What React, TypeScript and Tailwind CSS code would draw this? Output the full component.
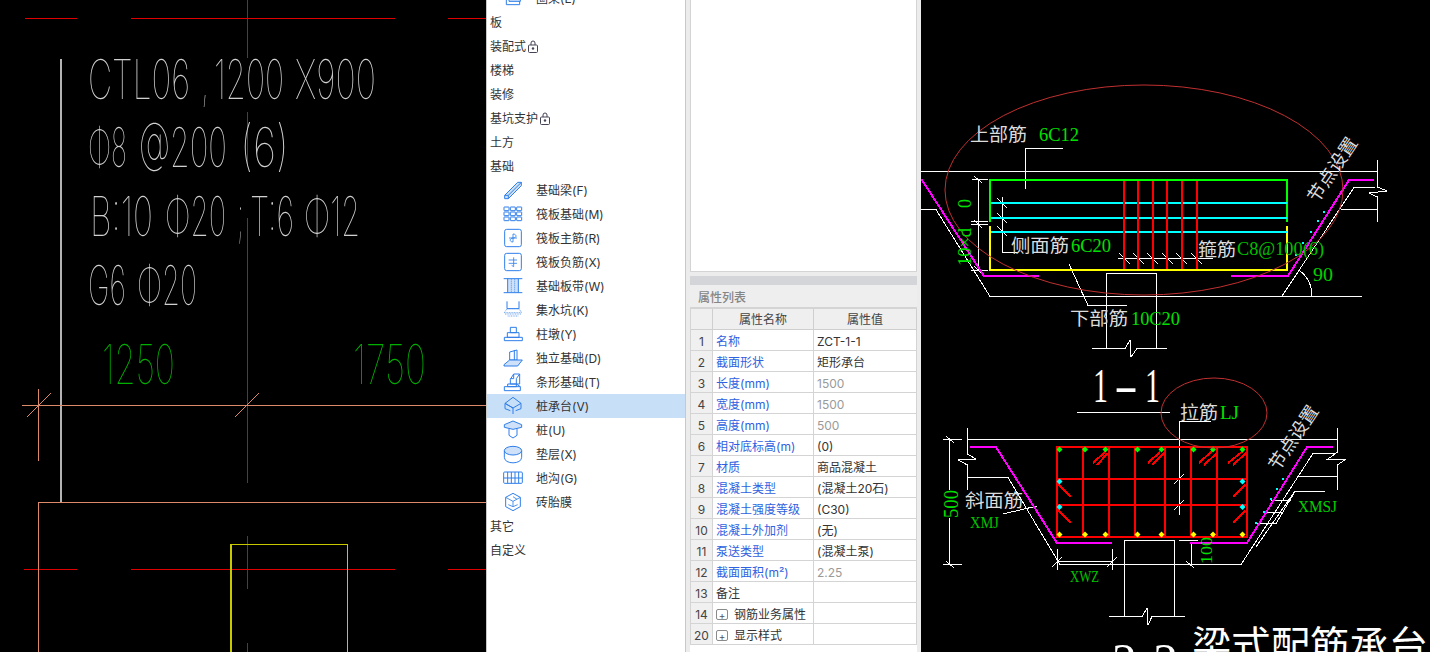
import React from "react";

const B = "#2f7fea";
const F = "#cfe1f9";

type IconProps = { children: React.ReactNode };
const Ico = ({ children }: IconProps) => (
  <svg width="20" height="20" viewBox="0 0 60 60" fill="none" stroke={B} strokeWidth="3" strokeLinejoin="round" className="shrink-0">
    {children}
  </svg>
);

const icons: Record<string, React.ReactNode> = {
  ring: <Ico><path d="M10 12 L50 12 L50 50 L10 50 Z" /><path d="M18 4 L52 4 L52 40 L18 40 Z" fill={F} /></Ico>,
  beam: <Ico><path d="M5 46 L44 7 L55 7 L55 17 L16 56 L5 56 Z" fill={F} /><path d="M5 46 L16 46 L16 56 M16 46 L55 7" /></Ico>,
  raft: <Ico><g>{[0, 1, 2].map((r) => [0, 1, 2].map((c) => <rect key={`${r}${c}`} x={3 + c * 19} y={9 + r * 15} width="15" height="11" rx="1" />))}</g></Ico>,
  rmain: <Ico><rect x="5" y="4" width="50" height="52" rx="6" /><path d="M30 18 C42 18 42 30 30 30 C20 30 18 42 30 42 M18 30 H42 M30 18 V42" strokeWidth="2.5" /></Ico>,
  rneg: <Ico><rect x="5" y="4" width="50" height="52" rx="6" /><path d="M17 24 H42 M17 34 H42 M32 16 V44 M32 44 L26 40" strokeWidth="2.5" /></Ico>,
  band: <Ico><rect x="14" y="8" width="32" height="42" fill={F} stroke="none" /><path d="M2 8 H58 M2 50 H58 M14 8 V50 M46 8 V50" /><path d="M25 10 V48 M35 10 V48" strokeDasharray="3 3" strokeWidth="2.5" /></Ico>,
  pit: <Ico><path d="M12 4 V26 H48 V4" /><path d="M4 38 L12 26 H48 L56 38 Z" strokeWidth="2" strokeDasharray="3 2" /><path d="M6 42 L56 42 M14 48 H46" strokeDasharray="3 2" strokeWidth="2" /></Ico>,
  pier: <Ico><path d="M22 10 H40 V26 H22 Z M13 26 H48 V40 H13 Z M4 40 H58 V50 H4 Z" /></Ico>,
  iso: <Ico><path d="M20 12 L42 6 V36 H20 Z" /><path d="M34 6 V36" /><path d="M3 50 L20 36 H58 L44 54 H3 Z" fill={F} /></Ico>,
  strip: <Ico><path d="M22 22 L32 6 H50 V36 H22 Z M32 6 V20 H22 M50 6 L40 20 V36" /><path d="M14 36 H40 V44 H14 Z M4 44 H52 V56 H4 Z M40 36 L52 44" /></Ico>,
  cap: <Ico><path d="M30 4 L54 22 L30 36 L6 22 Z" /><path d="M6 22 V38 M54 22 V38 M6 22 L30 36 V54 M6 38 L22 44 M54 38 L38 44" /></Ico>,
  pile: <Ico><path d="M4 14 L30 3 L56 14 L56 22 L30 28 L4 22 Z" fill={F} /><path d="M18 26 V46 L30 54 L42 46 V26" /></Ico>,
  cush: <Ico><ellipse cx="30" cy="20" rx="26" ry="13" fill={F} /><path d="M4 20 V40 C4 62 56 62 56 40 V20" /></Ico>,
  trench: <Ico><rect x="2" y="12" width="56" height="34" rx="3" /><path d="M2 30 H58 M14 12 V46 M25 12 V46 M36 12 V46 M47 12 V46" /></Ico>,
  brick: <Ico><path d="M30 4 L52 16 V44 L30 56 L8 44 V16 Z" /><path d="M8 16 L30 28 L52 16 M30 28 V44 M16 38 L30 44 L44 38 M30 14 L42 22" strokeWidth="2.5" /></Ico>,
};

const Lock = () => (
  <svg width="10" height="13" viewBox="0 0 10 13" fill="none" stroke="#445" strokeWidth="1" className="ml-[2px]">
    <path d="M3 5 V3 a2 2 0 0 1 4 0 V5" />
    <rect x="0.5" y="5" width="9" height="7.5" rx="1" />
    <circle cx="5" cy="8.5" r="1.2" fill="#445" stroke="none" />
  </svg>
);

type Row = { t: string; icon?: string; lock?: boolean; sel?: boolean };
const rows: Row[] = [
  { t: "圈梁(E)", icon: "ring" },
  { t: "板" },
  { t: "装配式", lock: true },
  { t: "楼梯" },
  { t: "装修" },
  { t: "基坑支护", lock: true },
  { t: "土方" },
  { t: "基础" },
  { t: "基础梁(F)", icon: "beam" },
  { t: "筏板基础(M)", icon: "raft" },
  { t: "筏板主筋(R)", icon: "rmain" },
  { t: "筏板负筋(X)", icon: "rneg" },
  { t: "基础板带(W)", icon: "band" },
  { t: "集水坑(K)", icon: "pit" },
  { t: "柱墩(Y)", icon: "pier" },
  { t: "独立基础(D)", icon: "iso" },
  { t: "条形基础(T)", icon: "strip" },
  { t: "桩承台(V)", icon: "cap", sel: true },
  { t: "桩(U)", icon: "pile" },
  { t: "垫层(X)", icon: "cush" },
  { t: "地沟(G)", icon: "trench" },
  { t: "砖胎膜", icon: "brick" },
  { t: "其它" },
  { t: "自定义" },
];

type Prop = { n: number; k: string; v?: string; plain?: boolean; gray?: boolean; plus?: boolean };
const props: Prop[] = [
  { n: 1, k: "名称", v: "ZCT-1-1" },
  { n: 2, k: "截面形状", v: "矩形承台" },
  { n: 3, k: "长度(mm)", v: "1500", gray: true },
  { n: 4, k: "宽度(mm)", v: "1500", gray: true },
  { n: 5, k: "高度(mm)", v: "500", gray: true },
  { n: 6, k: "相对底标高(m)", v: "(0)" },
  { n: 7, k: "材质", v: "商品混凝土" },
  { n: 8, k: "混凝土类型", v: "(混凝土20石)" },
  { n: 9, k: "混凝土强度等级", v: "(C30)" },
  { n: 10, k: "混凝土外加剂", v: "(无)" },
  { n: 11, k: "泵送类型", v: "(混凝土泵)" },
  { n: 12, k: "截面面积(m²)", v: "2.25", gray: true },
  { n: 13, k: "备注", plain: true },
  { n: 14, k: "钢筋业务属性", plain: true, plus: true },
  { n: 20, k: "显示样式", plain: true, plus: true },
];

const THIN = "Inter, Roboto, 'Liberation Sans', sans-serif";
const SERIF = "'Liberation Serif', 'Noto Sans CJK SC', serif";

const Thin = ({ x, w, y, c = "#d0d0d0", children }: { x: number; w: number; y: number; c?: string; children: string }) => (
  <text x={x} y={y} textLength={w} lengthAdjust="spacingAndGlyphs" fontSize="55" fontWeight="100" fontFamily={THIN} fill={c}>
    {children}
  </text>
);

const P = ({ d, c = "#fff", w = 1 }: { d: string; c?: string; w?: number }) => <path d={d} stroke={c} strokeWidth={w} fill="none" />;

const T = ({ x, y, w, c = "#dcdcdc", s = 18, r, children }: { x: number; y: number; w?: number; c?: string; s?: number; r?: number; children: string }) => (
  <text
    x={x}
    y={y}
    fill={c}
    fontSize={s}
    fontFamily={SERIF}
    textLength={w}
    lengthAdjust={w ? "spacingAndGlyphs" : undefined}
    transform={r !== undefined ? `rotate(${r} ${x} ${y})` : undefined}
  >
    {children}
  </text>
);

const Dot = ({ x, y, c }: { x: number; y: number; c: string }) => (
  <path d={`M${x} ${y - 3}L${x + 3} ${y}L${x} ${y + 3}L${x - 3} ${y}Z`} fill={c} shapeRendering="auto" />
);

const LeftCad = () => {
  const red = "#e00000";
  const sal = "#dd8a6a";
  return (
    <svg width="486" height="652" viewBox="0 0 486 652" className="block will-change-transform" shapeRendering="crispEdges">
      <P c={red} d="M25 18.5H77M131 18.5H395M448 18.5H486M247.5 0V58M247.5 112V165M247.5 218V483M247.5 536V589M247.5 643V652M24 569.5H77M131 569.5H395M448 569.5H486" />
      <P c="#b4b4b4" w={1.5} d="M61 59V502" />
      <P c={sal} d="M22 405.5H486M38.5 389V461M27 417L51 393M235 417L259 393M38.5 652V502.5H486" />
      <P c="#c8c800" w={1.5} d="M231 652V544.5H347.5V652" />
      <g shapeRendering="auto">
        <Thin x={88} w={102} y={99}>CTL06</Thin>
        <Thin x={202} w={6} y={99}>,</Thin>
        <Thin x={214} w={70} y={99}>1200</Thin>
        <Thin x={295} w={81} y={99}>X900</Thin>
        <Thin x={88} w={39} y={167}>Φ8</Thin>
        <Thin x={139} w={88} y={167}>@200</Thin>
        <Thin x={240} w={49} y={167}>(6)</Thin>
        <Thin x={90} w={63} y={236}>B:10</Thin>
        <Thin x={165} w={61} y={236}>Φ20</Thin>
        <Thin x={238} w={5} y={236}>;</Thin>
        <Thin x={250} w={44} y={236}>T:6</Thin>
        <Thin x={304} w={56} y={236}>Φ12</Thin>
        <Thin x={88} w={38} y={305}>G6</Thin>
        <Thin x={137} w={60} y={305}>Φ20</Thin>
        <Thin x={102} w={73} y={384} c="#00b000">1250</Thin>
        <Thin x={353} w={73} y={384} c="#00b000">1750</Thin>
      </g>
    </svg>
  );
};

const RightCad = () => {
  const g = "#00e000";
  const mag = "#ff00ff";
  const red = "#ff0000";
  const cy = "#00ffff";
  const top = [1059.5, 1085, 1105.5, 1137.5, 1161.5, 1193.5, 1213, 1242.5];
  return (
    <svg width="509" height="652" viewBox="921 0 509 652" className="block" shapeRendering="crispEdges">
      {/* upper section */}
      <P d="M921 171.5H1377M921 209.5H936L990 296.5H1362M1282 296L1354 187.5H1375M1341 209.5H1377M1377.5 160V187L1387 191L1369 193L1377.5 197V222" />
      <P d="M1298 270C1306 274 1312 284 1312 296" />
      <P d="M972 179.5H988M978.5 179V270M971 224.5H988M971 221H988M971 270.5H988M974 176L982 183M974 220L982 228M974 266L982 274" />
      <P d="M1025.5 189V148.5H1063M1002.5 197V252.5H1018M997 198L1007 208M997 213L1007 223M997 226L1007 236" />
      <P d="M1069 264L1088 305.5H1127M1118 258.5H1213M1119 253L1130 264M1133 253L1144 264M1147 253L1158 264M1162 253L1173 264M1176 253L1187 264M1191 253L1202 264" />
      <P d="M1092 348.5H1125L1130 340L1131 357L1137 348.5H1167M1106.5 348V273.5H1156.5V348" />
      <P c="#00ff00" w={2} d="M990 222V180H1287V222" />
      <P c="#ffff00" w={2} d="M990 226V270H1287V226" />
      <P c={cy} w={2} d="M991 203H1287M991 218H1287M991 232H1287" />
      <P c={red} w={2} d="M1124 181V269M1138 181V269M1153 181V269M1167 181V269M1182 181V269M1197 181V269" />
      <P c={mag} w={2} d="M921 180H922L984 276H1039M1231 276H1288L1349 180H1374" />
      <g fill={cy}>
        {[[1296, 255], [1303, 243], [1311, 232], [1318, 221], [1324, 212]].map(([x, y]) => (
          <rect key={`${x}`} x={x - 1} y={y - 1} width="2" height="2" />
        ))}
      </g>
      <ellipse cx="1144" cy="190" rx="199" ry="105" stroke="#c03030" fill="none" shapeRendering="auto" />

      {/* lower section */}
      <P d="M967 439.5H1337M967.5 428V454L976 459L958 460L967.5 465V490M967.5 477.5H1008L1060 564.5H1241L1313 453.5H1335M1297 476.5H1337M1337.5 428V452L1328 459L1346 459L1337.5 465V490" />
      <P d="M949.5 439V490M949.5 518V564M943 439.5H962M943 564.5H962M946 436L954 443M946 561L954 568" />
      <P d="M1003 514L1037 506M1057.5 549V570M1112.5 549V570M1057 561.5H1112M1052 567L1062 557M1107 567L1117 557M1060 564H1241" />
      <P d="M1109 616.5H1142L1147 608L1148 625L1152 616.5H1185M1124.5 616V540.5H1174V616" />
      <P d="M1179.5 515V421.5H1211M1174 484L1184 474M1174 510L1184 500" />
      <P d="M1191.5 543V564M1179 540.5H1198M1186 561L1194 568M1077 412.5H1170" />
      <P d="M1325 491.5H1295L1276 523.5H1256M1283 512.5H1263M1291 500.5H1271M1295 491L1256 547" />
      <P c={red} w={2} d="M1057 447H1246.5V537H1057ZM1057 479H1246.5M1057 505H1246.5M1083 447V537M1109 447V537M1135 447V537M1165 447V537M1191 447V537M1217 447V537" />
      <P c={red} w={2} d="M1105 452L1093 463M1108 453L1097 465M1160 452L1148 463M1164 453L1152 465M1213 450L1199 463M1217 453L1204 465M1243 451L1228 463M1246 453L1233 465M1058 484L1071 497M1058 510L1071 523M1245 485L1233 497M1245 511L1233 523" />
      <P c={mag} w={2} d="M970 447H996L1057 543H1112M1190 543H1247L1307 447H1333" />
      {top.map((x) => <Dot key={x} x={x} y={449.5} c="#00ff00" />)}
      {top.map((x) => <Dot key={x} x={x} y={534.5} c="#ffff00" />)}
      {[[1059.5, 481.5], [1059.5, 507], [1242.5, 481.5], [1242.5, 507]].map(([x, y]) => (
        <Dot key={`${x}${y}`} x={x} y={y} c={cy} />
      ))}
      <g fill={cy}>
        {[[1256, 523], [1264, 512], [1271, 499], [1277, 489], [1283, 479]].map(([x, y]) => (
          <rect key={`${x}`} x={x - 1} y={y - 1} width="2" height="2" />
        ))}
      </g>
      <ellipse cx="1214" cy="413" rx="53" ry="35" stroke="#c03030" fill="none" shapeRendering="auto" />

      <g shapeRendering="auto">
        <T x={970} y={141} w={57}>上部筋</T>
        <T x={1039} y={141} w={40} c={g}>6C12</T>
        <T x={1011} y={252} w={58}>侧面筋</T>
        <T x={1071} y={252} w={40} c={g}>6C20</T>
        <T x={1198} y={256} w={38}>箍筋</T>
        <T x={1237} y={255} w={87} c="#00c000">C8@100(6)</T>
        <T x={1070} y={325} w={58}>下部筋</T>
        <T x={1131} y={325} w={49} c={g}>10C20</T>
        <T x={971} y={208} c={g} r={-90}>0</T>
        <T x={971} y={266} w={38} c={g} r={-90}>10×d</T>
        <T x={1313} y={281} w={20} c="#00d000">90</T>
        <T x={1317} y={204} w={74} r={-56} s={18}>节点设置</T>
        <T x={1093} y={402} w={15} s={48} c="#fff">1</T>
        <T x={1114} y={402} w={24} s={48} c="#fff">-</T>
        <T x={1145} y={402} w={15} s={48} c="#fff">1</T>
        <T x={958} y={518} w={28} c={g} r={-90} s={20}>500</T>
        <T x={965} y={507} w={58}>斜面筋</T>
        <T x={970} y={528} w={29} c="#00c000" s={16}>XMJ</T>
        <T x={1070} y={582} w={29} c="#00c000" s={16}>XWZ</T>
        <T x={1180} y={419} w={38}>拉筋</T>
        <T x={1220} y={419} w={19} c={g}>LJ</T>
        <T x={1278} y={472} w={74} r={-56} s={18}>节点设置</T>
        <T x={1298} y={512} w={39} c="#00d000" s={16}>XMSJ</T>
        <T x={1212} y={564} w={27} c={g} r={-90} s={16}>100</T>
        <T x={1112} y={677} w={66} s={48} c="#fff">2-2</T>
        <T x={1192} y={659} w={236} s={39} c="#fff">梁式配筋承台</T>
      </g>
    </svg>
  );
};

export default function App() {
  return (
    <div className="flex h-[652px] w-[1430px] overflow-hidden bg-white font-['Inter','Noto_Sans_CJK_SC',sans-serif] text-[12px] text-[#333]">
      <div className="w-[486px] shrink-0 bg-black">
        <LeftCad />
      </div>

      <div className="w-[200px] shrink-0 overflow-hidden border-x border-[#c8c8c8] bg-white">
        <div className="-mt-[14px]">
          {rows.map((r) => (
            <div
              key={r.t}
              className={`flex h-6 items-center ${r.icon ? "pl-[16px]" : "pl-[3px]"} ${r.sel ? "bg-[#c8dff8]" : ""}`}
            >
              {r.icon && <span className="mr-[13px] flex">{icons[r.icon]}</span>}
              <span className="pt-[2px]">{r.t}</span>
              {r.lock && <Lock />}
            </div>
          ))}
        </div>
      </div>

      <div className="flex w-[235px] shrink-0 flex-col bg-[#ececec] px-1">
        <div className="h-[272px] shrink-0 border border-t-0 border-[#d4d4d4] bg-white" />
        <div className="mt-1 flex flex-1 flex-col bg-white">
          <div className="h-[9px] shrink-0 bg-[#d3d5d8]" />
          <div className="flex h-[22px] shrink-0 items-center bg-[#eeeeee] pl-2 pt-[3px] font-medium text-[#858585]">属性列表</div>
          <div className="flex shrink-0 flex-col border-t-2 border-l border-[#d4d4d4]">
            <div className="flex h-[21px] border-b border-[#cfcfcf] bg-[#efefef] text-[#444]">
              <div className="w-[22px] border-r border-[#cfcfcf]" />
              <div className="flex w-[101px] items-center justify-center border-r border-[#cfcfcf] pt-[2px]">属性名称</div>
              <div className="flex flex-1 items-center justify-center border-r border-[#cfcfcf] pt-[2px]">属性值</div>
            </div>
            {props.map((p) => (
              <div key={p.n} className="flex h-[21px] border-b border-[#d4d4d4] pt-0">
                <div className="flex w-[22px] items-center justify-center border-r border-[#d4d4d4] bg-[#f0f0f0] pt-[3px] text-[#444]">{p.n}</div>
                <div className={`flex w-[101px] items-center border-r border-[#d4d4d4] pl-[3px] pt-[3px] ${p.plain ? "text-[#333]" : "text-[#2f62e0]"}`}>
                  {p.plus && (
                    <span className="mr-[6px] flex h-[11px] w-[12px] items-center justify-center rounded-[2px] border border-[#8a8a8a] text-[10px] leading-none text-[#555]">+</span>
                  )}
                  {p.k}
                </div>
                <div className={`flex flex-1 items-center border-r border-[#d4d4d4] pl-[3px] pt-[3px] ${p.gray ? "text-[#9a9a9a]" : "text-[#333]"}`}>{p.v}</div>
              </div>
            ))}
          </div>
        </div>
      </div>

      <div className="flex-1 bg-black">
        <RightCad />
      </div>
    </div>
  );
}
